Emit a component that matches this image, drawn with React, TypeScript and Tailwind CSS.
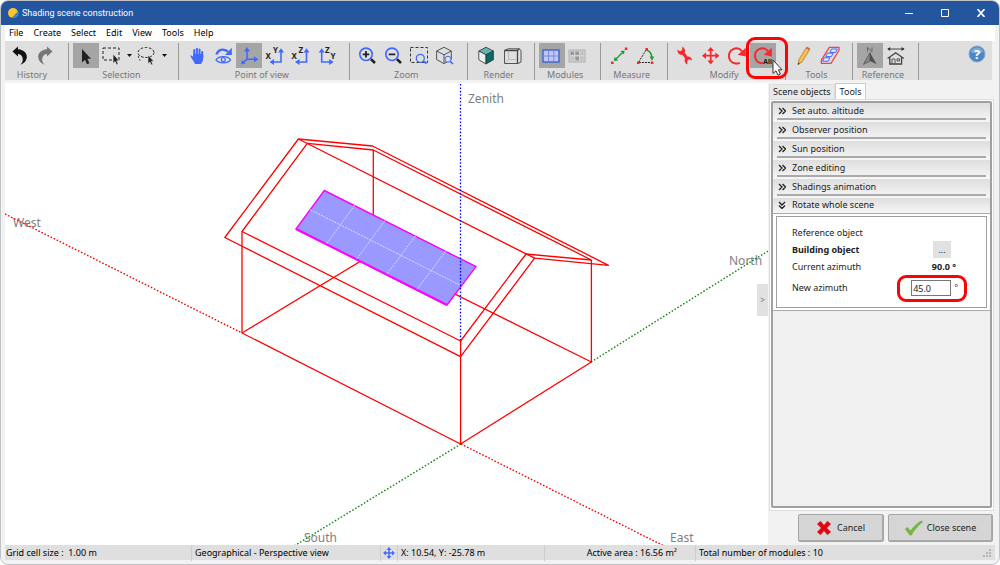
import { useState } from 'react';
import type { ReactNode } from 'react';

const BLUE = '#4169ff';
const RED = '#f8282c';

const pointer = 'M0 0V13.5L3 10.8L5 15.2L7.4 14.2L5.4 9.8H9Z';

interface GlyphProps {
  children: ReactNode;
}

function Glyph({ children }: GlyphProps) {
  return (
    <svg width="26" height="25" viewBox="0 0 26 25" fill="none" className="block">
      {children}
    </svg>
  );
}

interface Tool {
  name: string;
  icon: ReactNode;
  active?: boolean;
  menu?: boolean;
  highlighted?: boolean;
}

interface ToolGroup {
  label: string;
  tools: Tool[];
}

const undoPath =
  'M6.5 8.5L12 3.5V6.3C18 6.8 21.2 10.5 20.8 14.5C20.4 18 18 20.5 14.5 21.8C17 19 17.3 16.5 16.3 14C15.4 12 14 11.2 12 11V13.5Z';

const groups: ToolGroup[] = [
  {
    label: 'History',
    tools: [
      { name: 'Undo', icon: <path d={undoPath} fill="#111" /> },
      { name: 'Redo', icon: <path d={undoPath} fill="#777" transform="translate(27 0) scale(-1 1)" /> },
    ],
  },
  {
    label: 'Selection',
    tools: [
      { name: 'Select', active: true, icon: <path d={pointer} fill="#222" transform="translate(9 6)" /> },
      {
        name: 'Rectangle selection',
        menu: true,
        icon: (
          <>
            <rect x="4" y="5" width="16" height="12" stroke="#222" strokeDasharray="3 2" />
            <path d={pointer} fill="#222" stroke="#dfdfdf" transform="translate(14 11) scale(.7)" />
          </>
        ),
      },
      {
        name: 'Lasso selection',
        menu: true,
        icon: (
          <>
            <ellipse cx="12" cy="9.5" rx="8" ry="5" stroke="#222" strokeDasharray="2.6 1.6" />
            <path d="M5 12.5C3.5 14 5.5 15.5 6 17.5" stroke="#222" strokeDasharray="2.6 1.6" />
            <path d={pointer} fill="#222" stroke="#dfdfdf" transform="translate(14 12) scale(.65)" />
          </>
        ),
      },
    ],
  },
  {
    label: 'Point of view',
    tools: [
      {
        name: 'Pan',
        icon: (
          <>
            <path d="M10.2 13V7M12.9 13V5.8M15.5 13V6.6M18.2 14V9" stroke={BLUE} strokeWidth="2" strokeLinecap="round" />
            <path d="M6.2 12.8C7.4 11.8 8.4 13 9.2 14V11H19.2V15C19.2 18 18 19.5 17 21H11C9.8 18.5 7.8 15.8 6.2 12.8Z" fill={BLUE} />
          </>
        ),
      },
      {
        name: 'Orbit',
        icon: (
          <>
            <path d="M6.5 11.5C8 6.5 13 5.2 18 8.5" stroke={BLUE} strokeWidth="2.4" />
            <path d="M21.8 4.8V12H15Z" fill={BLUE} />
            <path d="M6 16.8C9 12.6 17.5 12.6 20.6 16.8C17.5 20.8 9 20.8 6 16.8Z" stroke={BLUE} strokeWidth="1.2" />
            <circle cx="13.3" cy="16.6" r="2" stroke={BLUE} strokeWidth="1.2" />
          </>
        ),
      },
      {
        name: 'Perspective',
        active: true,
        icon: (
          <>
            <path d="M11 7V16.3H19M11 16.3L7 19.6" stroke={BLUE} strokeWidth="1.6" />
            <path d="M11 4L14 8.5H8ZM22.5 16.3L18 13.3V19.3ZM5 21.5L6 17L9.5 20.6Z" fill={BLUE} />
          </>
        ),
      },
      {
        name: 'XY view',
        icon: (
          <>
            <path d="M19 8V19H11" stroke={BLUE} strokeWidth="1.6" />
            <path d="M19 5.2L22 9.5H16ZM7.5 19L12 16V22Z" fill={BLUE} />
            <text x="3.4" y="16" fontSize="8" fontWeight="bold" fill="#222">X</text>
            <text x="11" y="9.6" fontSize="8" fontWeight="bold" fill="#222">Y</text>
          </>
        ),
      },
      {
        name: 'XZ view',
        icon: (
          <>
            <path d="M18.5 8V19H11" stroke={BLUE} strokeWidth="1.6" />
            <path d="M18.5 5.2L21.5 9.5H15.5ZM7 19L11.5 16V22Z" fill={BLUE} />
            <text x="3.4" y="16" fontSize="8" fontWeight="bold" fill="#222">X</text>
            <text x="10.4" y="9.6" fontSize="8" fontWeight="bold" fill="#222">Z</text>
          </>
        ),
      },
      {
        name: 'ZY view',
        icon: (
          <>
            <path d="M7.7 8V19H16" stroke={BLUE} strokeWidth="1.6" />
            <path d="M7.7 5.2L10.7 9.5H4.7ZM19.7 19L15.2 16V22Z" fill={BLUE} />
            <text x="11" y="9.6" fontSize="8" fontWeight="bold" fill="#222">Z</text>
            <text x="16.4" y="16" fontSize="8" fontWeight="bold" fill="#222">Y</text>
          </>
        ),
      },
    ],
  },
  {
    label: 'Zoom',
    tools: [
      {
        name: 'Zoom in',
        icon: (
          <>
            <circle cx="12" cy="11.3" r="6.2" stroke={BLUE} strokeWidth="1.6" />
            <path d="M12 8V14.6M8.7 11.3H15.3" stroke="#222" strokeWidth="1.8" />
            <path d="M17 16.3L21 20" stroke="#222" strokeWidth="2.6" />
          </>
        ),
      },
      {
        name: 'Zoom out',
        icon: (
          <>
            <circle cx="12" cy="11.3" r="6.2" stroke={BLUE} strokeWidth="1.6" />
            <path d="M8.7 11.3H15.3" stroke="#222" strokeWidth="1.8" />
            <path d="M17 16.3L21 20" stroke="#222" strokeWidth="2.6" />
          </>
        ),
      },
      {
        name: 'Zoom area',
        icon: (
          <>
            <rect x="4.5" y="4.5" width="17" height="15" stroke="#333" strokeDasharray="3 2" />
            <circle cx="14.3" cy="15.3" r="4" stroke={BLUE} strokeWidth="1.3" fill="#dfdfdf" />
            <path d="M17.5 18.3L20.5 20.5" stroke={BLUE} strokeWidth="2" />
          </>
        ),
      },
      {
        name: 'Zoom to object',
        icon: (
          <>
            <path d="M12 4.3L19.3 8V16.6L12 20.6L4.6 16.6V8ZM4.6 8L12 11.8L19.3 8M12 11.8V20.6" stroke="#555" />
            <circle cx="16" cy="16.2" r="3" stroke={BLUE} fill="#dfdfdf" />
            <path d="M18.2 18.4L21 21" stroke={BLUE} strokeWidth="1.6" />
          </>
        ),
      },
    ],
  },
  {
    label: 'Render',
    tools: [
      {
        name: 'Shaded render',
        icon: (
          <>
            <path d="M13 4.2L20.4 8L13 11.8L5.8 8Z" fill="#63b3b3" stroke="#333" strokeWidth=".8" />
            <path d="M5.8 8L13 11.8V21L5.8 16.8Z" fill="#eee" stroke="#333" strokeWidth=".8" />
            <path d="M20.4 8V16.8L13 21V11.8Z" fill="#08696c" stroke="#333" strokeWidth=".8" />
          </>
        ),
      },
      {
        name: 'Wireframe render',
        icon: (
          <>
            <path d="M5.5 7.5L9 5.8H20.5L22 7.5V19L19 20.5H5.5Z" stroke="#555" />
            <path d="M5.5 7.5H18.5V20.5M18.5 7.5L20.5 5.8" stroke="#444" strokeWidth="1.3" />
            <path d="M9.5 8V16.5H18M9.5 16.5L6 20" stroke="#bbb" />
          </>
        ),
      },
    ],
  },
  {
    label: 'Modules',
    tools: [
      {
        name: 'Show modules',
        active: true,
        icon: (
          <>
            <rect x="4" y="7" width="16" height="12" fill="#c4c4f4" stroke="#3566cf" strokeWidth="1.4" />
            <path d="M9.5 7V19M14.8 7V19M4 13H20" stroke="#6d8ddd" />
          </>
        ),
      },
      {
        name: 'Partition modules',
        icon: (
          <>
            <rect x="4" y="7" width="16" height="12" fill="#d3d3d3" stroke="#b0b0b0" />
            <path d="M5.5 8.5H9V12H5.5ZM10.3 8.5H14V12H10.3ZM10.3 13.5H14V17.5H10.3Z" fill="#999" />
            <path d="M5.5 13.5H9V17.5H5.5ZM15.2 8.5H18.6V12H15.2ZM15.2 13.5H18.6V17.5H15.2Z" fill="#c2c2c2" />
          </>
        ),
      },
    ],
  },
  {
    label: 'Measure',
    tools: [
      {
        name: 'Measure distance',
        icon: (
          <>
            <path d="M9 17L17.5 8.5" stroke="#229b33" strokeWidth="1.4" />
            <path d="M8 18L8.6 13.8L12.2 17.4ZM18.6 7.4L18 11.6L14.4 8Z" fill="#229b33" />
            <path d="M5 18.5H7.6V21H5ZM18.8 4.5H21.4V7H18.8Z" fill={RED} />
          </>
        ),
      },
      {
        name: 'Measure angle',
        icon: (
          <>
            <path d="M14 7L6.5 19.5H20" stroke="#222" strokeDasharray="2 1" />
            <path d="M14.5 7C18 8 20 12 20 16.5" stroke="#229b33" strokeWidth="1.4" />
            <path d="M17.6 13.5H22.2L20 17.8Z" fill="#229b33" />
            <path d="M13.4 5H16V7.5H13.4ZM5 18.4H7.6V21H5ZM18.8 18.4H21.4V21H18.8Z" fill={RED} />
          </>
        ),
      },
    ],
  },
  {
    label: 'Modify',
    tools: [
      {
        name: 'Modify object',
        icon: (
          <path
            d="M5.6 6.4C7 7.8 8.6 8.6 9.6 7.6C10.6 6.6 10.2 5 10.2 3.8C12.8 5 13.6 7.2 12.8 9.8L15.4 13.4C18.4 13.2 20 14.8 20 17.8C18.6 16.6 17 16.2 16 17C15 18 15.2 19.6 15.6 21.4C12.8 20.4 12 18 13 15.2L10.2 11.8C7.2 12 5 9.6 5.6 6.4Z"
            fill={RED}
          />
        ),
      },
      {
        name: 'Move object',
        icon: (
          <>
            <path d="M12.7 6V19.5M6 12.7H19.5" stroke={RED} strokeWidth="1.7" />
            <path d="M12.7 4L16 8H9.4ZM12.7 21.4L16 17.4H9.4ZM4 12.7L8 9.4V16ZM21.4 12.7L17.4 9.4V16Z" fill={RED} />
          </>
        ),
      },
      {
        name: 'Rotate object',
        icon: (
          <>
            <path d="M15.8 19.8C10 22.2 4.8 18.3 5 12.6C5.2 6.2 13 2.6 18 8.2" stroke={RED} strokeWidth="2" />
            <path d="M21.8 4.8V13.6L13.8 11.8Z" fill={RED} />
          </>
        ),
      },
      {
        name: 'Rotate whole scene',
        active: true,
        highlighted: true,
        icon: (
          <>
            <path d="M13 20.3C8 20.5 4.8 17 5 12.6C5.2 6.2 13 2.6 18 8.2" stroke={RED} strokeWidth="2" />
            <path d="M21.8 4.8V13.6L13.8 11.8Z" fill={RED} />
            <text x="13" y="21" fontSize="7" fontWeight="bold" fill="#111" fontFamily="Liberation Sans, sans-serif">All</text>
          </>
        ),
      },
    ],
  },
  {
    label: 'Tools',
    tools: [
      {
        name: 'Edit',
        icon: (
          <>
            <path d="M7.5 17L14.8 5.2L18.4 7.4L11 19.2L7 21.6Z" fill="#eab041" stroke="#b98326" strokeWidth=".6" />
            <path d="M14.8 5.2L15.8 3.6L19.3 5.8L18.4 7.4Z" fill="#d8614c" />
            <path d="M9.2 18L16.6 6.3" stroke="#f8d885" />
            <path d="M7.2 19.5L8.8 20.5L6.8 21.9Z" fill="#333" />
          </>
        ),
      },
      {
        name: 'Fill zone',
        icon: (
          <>
            <path d="M4.4 20.4V17L12.3 4.4H22V7.4L14 20.4Z" stroke="#f04248" strokeWidth="1.3" />
            <path d="M14.6 6H20.2L18.6 9.4H13ZM10.4 10.2H16L14.4 13.6H8.8ZM7.2 14.8H12.8L11.2 18.2H5.6Z" fill="#e5e8fc" stroke={BLUE} />
          </>
        ),
      },
    ],
  },
  {
    label: 'Reference',
    tools: [
      {
        name: 'North',
        active: true,
        icon: (
          <>
            <path d="M10.5 8.6V4.4L15 8.6V4.4" stroke="#666" />
            <path d="M13 9.6L6.5 21.3L13 18Z" fill="#888" stroke="#555" strokeWidth=".8" />
            <path d="M13 9.6L19.6 21.3L13 18Z" fill="#505050" />
          </>
        ),
      },
      {
        name: 'Reference building',
        icon: (
          <>
            <path d="M5 6H21" stroke="#444" />
            <path d="M4.2 6L7.2 4V8ZM21.6 6L18.6 4V8Z" fill="#333" />
            <path d="M4.6 15.5L12.7 9.8L20.8 15.5M6.8 14.5V21H18.6V14.5" stroke="#444" strokeWidth="1.3" />
            <path d="M9 21V16H12V21M14 15.8H16.5V18H14Z" stroke="#555" />
          </>
        ),
      },
    ],
  },
];

function ToolButton({ tool }: { tool: Tool }) {
  return (
    <div className="relative flex items-center">
      <button type="button" aria-label={tool.name} className={tool.active ? 'bg-[#a5a5a5]' : 'hover:bg-gray-300'}>
        <Glyph>{tool.icon}</Glyph>
      </button>
      {tool.menu && (
        <button type="button" aria-label={`${tool.name} options`} className="w-[9px] flex justify-center">
          <svg width="5" height="3" viewBox="0 0 5 3">
            <path d="M0 0H5L2.5 3Z" fill="#111" />
          </svg>
        </button>
      )}
      {tool.highlighted && (
        <>
          <span className="absolute -left-1 -top-1.5 z-10 w-[42px] h-[42px] border-3 border-[#fa0505] rounded-[9px]" />
          <svg width="12" height="17" viewBox="-1 -1 12 17" className="absolute left-[22px] top-4 z-20">
            <path d={pointer} fill="white" stroke="#333" />
          </svg>
        </>
      )}
    </div>
  );
}

function Toolbar() {
  return (
    <div className="flex h-[39px] mr-[3px] bg-[#dfdfdf]">
      <div className="flex flex-1 justify-between">
        {groups.map((group, idx) => (
          <div
            key={group.label}
            className={`mt-0.5 border-r border-[#999] flex flex-col items-center ${idx === 0 ? 'pl-px pr-2.5' : 'pl-1 pr-[9px]'}`}
          >
            <div className="flex">
              {group.tools.map((tool) => (
                <ToolButton key={tool.name} tool={tool} />
              ))}
            </div>
            <span className="text-[9px] leading-[14px] text-[#777]">{group.label}</span>
          </div>
        ))}
      </div>
      <div className="w-[73px] flex justify-end items-start pr-1.5 pt-1">
        <button type="button" aria-label="Help">
          <svg width="18" height="18" viewBox="0 0 18 18">
            <circle cx="9" cy="9" r="8" fill="#4d86c6" stroke="#82a8d4" />
            <path d="M2.5 7A7 7 0 0 1 15.5 7Q9 10 2.5 7Z" fill="#79a7da" />
            <text x="9" y="13.5" fontSize="13" fontWeight="bold" fill="white" textAnchor="middle">?</text>
          </svg>
        </button>
      </div>
    </div>
  );
}

function Scene() {
  return (
    <svg viewBox="5 83 763 462" preserveAspectRatio="xMinYMin meet" className="block w-full h-full" fill="none">
      {/* Axis names */}
      <g fontSize="12" fill="#808080">
        <text x="468" y="103">Zenith</text>
        <text x="13" y="227">West</text>
        <text x="729" y="265">North</text>
        <text x="304" y="542">South</text>
        <text x="670" y="542">East</text>
      </g>

      {/* Axes */}
      <g strokeWidth="1.4" strokeDasharray="1.6 1.8">
        <path d="M5 214L242 333M461 444L664 546" stroke="#f00" />
        <path d="M461 444L294 546M591 362L768 251" stroke="#138a13" />
      </g>

      {/* Building */}
      <g stroke="#f00" strokeWidth="1.3" strokeLinejoin="round">
        <path d="M298.4 139L224.8 237.5L460.6 356.7L534.6 258.2Z" />
        <path d="M307.3 143.3L242 231.5L460.6 341L526 254" />
        <path d="M298.4 139L372.5 146L608.5 265.3L534.6 258.2" />
        <path d="M307.3 143.3L373.3 150L591.4 260L526 254" />
        <path d="M242 231.5V333L460.6 444L591.4 362V260M460.6 341V444M373.3 150V250" />
        <path d="M242 333L373.3 253.5L591.4 362" />
      </g>

      {/* Module table */}
      <path d="M324.3 190.5L476 266.6L447 305L296 229Z" fill="#9999ff" stroke="#f0f" strokeWidth="1.4" />
      <path d="M296 229L447 305" stroke="#f0f" strokeWidth="2" />
      <g stroke="#d9d9ff" strokeDasharray="2 1">
        <path d="M310.2 209.8L461.4 285.8" />
        <path d="M354.6 205.4L326.2 244.2M385 220.6L356.4 259.4M415.4 236L386.6 274.6M445.6 251.2L416.8 289.8" />
      </g>
      <path d="M460.5 84V340" stroke="#00f" strokeWidth="1.3" strokeDasharray="1.6 1.8" />
    </svg>
  );
}

function Chevrons({ open }: { open: boolean }) {
  return (
    <svg width="8" height="8" viewBox="0 0 8 8" fill="none" stroke="#222" strokeWidth="1.3" className={open ? 'rotate-90' : ''}>
      <path d="M1 1L4 4L1 7M4.5 1L7.5 4L4.5 7" />
    </svg>
  );
}

const sections = ['Set auto. altitude', 'Observer position', 'Sun position', 'Zone editing', 'Shadings animation', 'Rotate whole scene'];

function ToolsPanel() {
  const [open, setOpen] = useState('Rotate whole scene');
  const [azimuth, setAzimuth] = useState('45.0');

  return (
    <aside className="w-[227px] shrink-0 flex flex-col bg-[#f2f2f2] text-[9px] leading-3 text-[#222]">
      <div className="flex items-end pl-px h-4">
        <button type="button" className="h-[15px] px-[3px] bg-[#e9e9e9] border border-b-0 border-[#ddd]">Scene objects</button>
        <button type="button" className="h-4 px-1 bg-white border border-b-0 border-[#ccc]">Tools</button>
      </div>

      <div className="flex-1 flex px-px pt-px pb-0.5 mx-px bg-white border border-[#ddd]">
        <div className="flex-1 border-2 border-[#a0a0a0] rounded-xs bg-[#f0f0f0]">
          {sections.map((section) => (
            <div key={section}>
              <div className={`px-1 bg-linear-to-b from-[#dedede] to-[#f6f6f6] ${open === section ? 'h-[15px]' : 'h-[19px]'}`}>
                <button
                  type="button"
                  aria-expanded={open === section}
                  onClick={() => setOpen(section)}
                  className={`flex items-center gap-1.5 w-full pl-px ${open === section ? 'h-[15px] pb-px' : 'h-[17px] border-b-2 border-[#aaa]'}`}
                >
                  <Chevrons open={open === section} />
                  {section}
                </button>
              </div>
              {open === section && section === 'Rotate whole scene' && (
                <div className="px-[3px] py-0.5 bg-white border-y border-[#aaa]">
                  <div className="flex flex-col pl-[15px] pr-3 pt-2 pb-[7px] border border-[#a0a0a0]">
                    <span className="h-4 flex items-center">Reference object</span>
                    <div className="h-[17px] flex items-center justify-between pr-[23px]">
                      <b>Building object</b>
                      <button type="button" aria-label="Choose reference object" className="w-[18px] h-[17px] bg-[#e1e1e1]">...</button>
                    </div>
                    <div className="h-[18px] flex items-center justify-between pr-[18px]">
                      <span>Current azimuth</span>
                      <b>90.0 °</b>
                    </div>
                    <div className="h-6 flex items-center justify-between">
                      <label htmlFor="azimuth">New azimuth</label>
                      <div className="h-[27px] flex items-center gap-[3px] pl-[11px] pr-1.5 mr-[7px] border-3 border-[#fa0505] rounded-[9px]">
                        <input
                          id="azimuth"
                          value={azimuth}
                          onChange={(e) => setAzimuth(e.target.value)}
                          className="w-10 h-4 pl-px bg-white border border-[#777] outline-none"
                        />
                        <span>°</span>
                      </div>
                    </div>
                  </div>
                </div>
              )}
            </div>
          ))}
        </div>
      </div>

      <div className="flex justify-end gap-1 py-[3px] pr-0.5">
        <button type="button" className="w-[86px] h-7 flex items-center justify-center gap-1.5 bg-[#d5d5d5] border border-[#a5a5a5] rounded-xs shadow-[inset_-1px_-1px_0_#aaa]">
          <svg width="14" height="14" viewBox="0 0 14 14">
            <path d="M3.5 0L7 4L10.5 0L14 3L10 7L14 11L10.5 14L7 10L3.5 14L0 11L4 7L0 3Z" fill="#e30613" />
          </svg>
          Cancel
        </button>
        <button type="button" className="w-[105px] h-7 flex items-center justify-center gap-1 bg-[#d5d5d5] border border-[#a5a5a5] rounded-xs shadow-[inset_-1px_-1px_0_#aaa]">
          <svg width="18" height="16" viewBox="0 0 18 16">
            <path d="M0 9L2.5 7L5.5 10.5C9 6 12.5 2.5 16.5 .5L18 2C13 6 9 10.5 6.5 15.5H4.8Z" fill="#78b543" />
          </svg>
          Close scene
        </button>
      </div>
    </aside>
  );
}

function StatusBar() {
  return (
    <footer className="flex items-center h-[15px] bg-[#dfdfdf] text-[9px] leading-4 whitespace-pre">
      <span className="w-[187px] pl-px border-r border-[#ccc]">Grid cell size :  1.00 m</span>
      <span className="w-[189px] pl-[3px] border-r border-[#ccc]">Geographical - Perspective view</span>
      <span className="w-[17px] flex justify-center border-r border-[#ccc]">
        <svg width="12" height="16" viewBox="0 -2 12 16">
          <path d="M6 1V11M1 6H11" stroke={BLUE} strokeWidth="1.4" />
          <path d="M6 0L8.4 3H3.6ZM6 12L8.4 9H3.6ZM0 6L3 3.6V8.4ZM12 6L9 3.6V8.4Z" fill={BLUE} />
        </svg>
      </span>
      <span className="w-[147px] pl-[3px] border-r border-[#ccc]">X: 10.54, Y: -25.78 m</span>
      <span className="w-[151px] pr-[18px] text-right border-r border-[#ccc]">Active area : 16.56 m²</span>
      <span className="flex-1 pl-[3px]">Total number of modules : 10</span>
      <svg width="8" height="8" viewBox="0 0 8 8" fill="#b5b5b5" className="mr-1">
        <path d="M6 0H8V2H6ZM6 3H8V5H6ZM6 6H8V8H6ZM3 3H5V5H3ZM3 6H5V8H3ZM0 6H2V8H0Z" />
      </svg>
    </footer>
  );
}

const menus = ['File', 'Create', 'Select', 'Edit', 'View', 'Tools', 'Help'];

export default function App() {
  return (
    <div className="h-screen bg-white font-['Noto_Sans',sans-serif] text-black">
      <div className="h-full flex flex-col border border-[#bfc3c8] rounded-lg overflow-hidden bg-[#f2f2f2]">
        <header className="h-6 flex items-center pl-[7px] bg-[#24559f] text-white">
          <svg width="11" height="11" viewBox="0 0 11 11">
            <circle cx="5" cy="5" r="5" fill="#fdc42e" />
            <path d="M10.8 4A5.5 5.5 0 0 1 3 9.5C6 9.5 7 4 10.8 4Z" fill="#2c8fd6" />
          </svg>
          <h1 className="flex-1 pl-[3px] pt-px font-[Roboto,sans-serif] text-[9px]">Shading scene construction</h1>
          <div className="flex">
            <button type="button" aria-label="Minimize" className="w-9 h-6 flex items-center justify-center">
              <svg width="8" height="8" viewBox="0 0 8 8"><path d="M0 4.5H8" stroke="white" /></svg>
            </button>
            <button type="button" aria-label="Maximize" className="w-9 h-6 flex items-center justify-center">
              <svg width="8" height="8" viewBox="0 0 8 8"><path d="M.5 .5H7.5V7.5H.5Z" fill="none" stroke="white" /></svg>
            </button>
            <button type="button" aria-label="Close" className="w-9 h-6 flex items-center justify-center">
              <svg width="8" height="8" viewBox="0 0 8 8"><path d="M.5 0L7.5 8M7.5 0L.5 8" stroke="white" strokeWidth="1.6" /></svg>
            </button>
          </div>
        </header>

        <div className="flex-1 min-h-0 flex flex-col px-1 pb-1">
          <nav className="flex h-4 items-center gap-2.5 pl-1 bg-white text-[9px] leading-4">
            {menus.map((menu) => (
              <button key={menu} type="button">{menu}</button>
            ))}
          </nav>
          <Toolbar />

          <div className="flex-1 min-h-0 flex pt-[3px]">
            <main className="relative flex-1 min-w-0 bg-white overflow-hidden">
              <Scene />
              <button type="button" aria-label="Collapse panel" className="absolute right-0 top-[201px] w-[11px] h-8 bg-[#e1e1e1] text-[8px] text-[#777]">
                &gt;
              </button>
            </main>
            <ToolsPanel />
          </div>
          <StatusBar />
        </div>
      </div>
    </div>
  );
}
